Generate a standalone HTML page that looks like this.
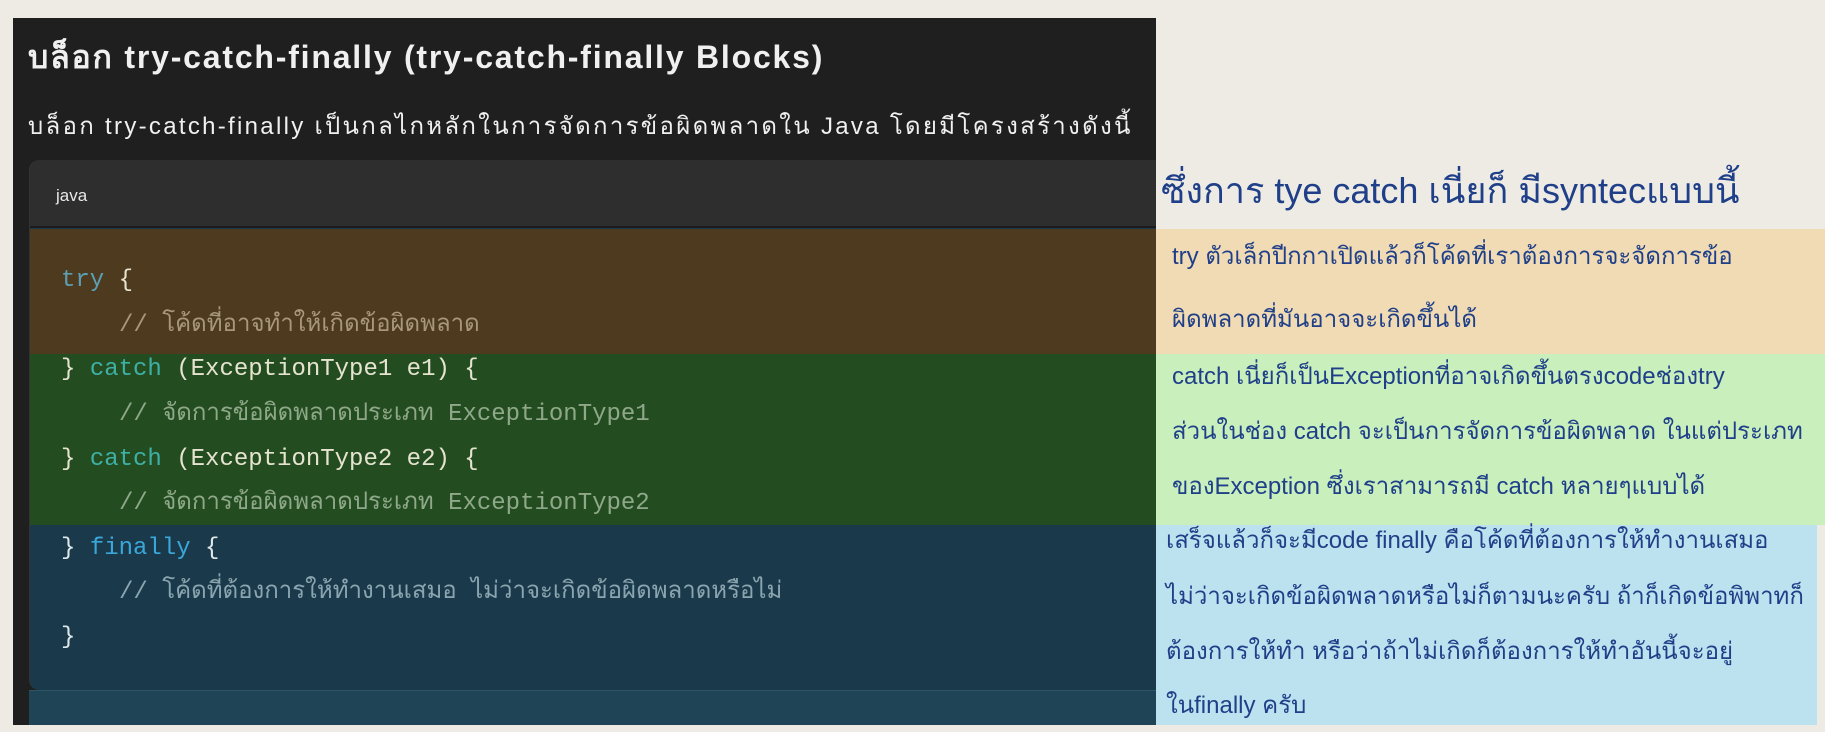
<!DOCTYPE html>
<html><head><meta charset="utf-8">
<style>
*{margin:0;padding:0;box-sizing:border-box}
body{width:1825px;height:732px;background:#eeebe5;position:relative;overflow:hidden;font-family:"Liberation Sans","Noto Sans CJK SC",sans-serif}
.abs{position:absolute}
#panel{left:13px;top:18px;width:1143px;height:707px;background:#1f1f1f}
.t{white-space:nowrap;color:#f0f0f0}
.code{font-family:"Liberation Mono","DejaVu Sans Mono","Noto Sans CJK SC",monospace;font-size:24px;white-space:nowrap;color:#e6e3d0;line-height:30px}
.r{font-size:24px;color:#1f3f88;white-space:nowrap;line-height:30px}
</style></head><body>
<div id="panel" class="abs"></div>
<div class="abs t" style="left:28px;top:32px;font-size:32px;font-weight:bold;letter-spacing:1.8px">บล็อก try-catch-finally (try-catch-finally Blocks)</div>
<div class="abs t" style="left:28px;top:106px;font-size:24px;letter-spacing:2.3px">บล็อก try-catch-finally เป็นกลไกหลักในการจัดการข้อผิดพลาดใน Java โดยมีโครงสร้างดังนี้</div>
<div class="abs" style="left:29px;top:160px;width:1127px;height:530px;border-radius:10px 0 0 10px;background:#1a3a4b;overflow:hidden;border-left:1px solid #333">
 <div class="abs" style="left:0;top:0;width:100%;height:68px;background:#2e2e2e;border-bottom:2px solid #1c1c1c"></div>
 <div class="abs" style="left:0;top:69px;width:100%;height:125px;background:#4d3a1f"></div>
 <div class="abs" style="left:0;top:194px;width:100%;height:171px;background:#234d20"></div>
</div>
<div class="abs" style="left:29px;top:690px;width:1127px;height:35px;background:#1f4455;border-top:1px solid #2c5566"></div>
<div class="abs t" style="left:56px;top:186px;font-size:17px;color:#e8e8e8">java</div>
<div class="abs code" style="left:61px;top:266px"><span style="color:#5c9fb3">try</span> {</div>
<div class="abs code" style="left:119px;top:311px;color:#a8977c">// โค้ดที่อาจทำให้เกิดข้อผิดพลาด</div>
<div class="abs code" style="left:61px;top:355px">} <span style="color:#3eb0a6">catch</span> (ExceptionType1 e1) {</div>
<div class="abs code" style="left:119px;top:400px;color:#8fa88a">// จัดการข้อผิดพลาดประเภท ExceptionType1</div>
<div class="abs code" style="left:61px;top:445px">} <span style="color:#3eb0a6">catch</span> (ExceptionType2 e2) {</div>
<div class="abs code" style="left:119px;top:489px;color:#8fa88a">// จัดการข้อผิดพลาดประเภท ExceptionType2</div>
<div class="abs code" style="left:61px;top:534px;color:#dfe8ea">} <span style="color:#3aa7da">finally</span> {</div>
<div class="abs code" style="left:119px;top:578px;color:#8ba5b0">// โค้ดที่ต้องการให้ทำงานเสมอ  ไม่ว่าจะเกิดข้อผิดพลาดหรือไม่</div>
<div class="abs code" style="left:61px;top:623px;color:#dfe8ea">}</div>

<div class="abs" style="left:1161px;top:162px;font-size:36px;color:#1f3f88;white-space:nowrap">ซึ่งการ tye catch เนี่ยก็ มีsyntecแบบนี้</div>
<div class="abs" style="left:1156px;top:229px;width:669px;height:125px;background:#f1dbb4"></div>
<div class="abs" style="left:1156px;top:354px;width:669px;height:171px;background:#c9efbd"></div>
<div class="abs" style="left:1156px;top:525px;width:661px;height:200px;background:#bde2ef"></div>
<div class="abs r" style="left:1172px;top:242px">try ตัวเล็กปีกกาเปิดแล้วก็โค้ดที่เราต้องการจะจัดการข้อ</div>
<div class="abs r" style="left:1172px;top:305px">ผิดพลาดที่มันอาจจะเกิดขึ้นได้</div>
<div class="abs r" style="left:1172px;top:362px">catch เนี่ยก็เป็นExceptionที่อาจเกิดขึ้นตรงcodeช่องtry</div>
<div class="abs r" style="left:1172px;top:417px">ส่วนในช่อง catch จะเป็นการจัดการข้อผิดพลาด ในแต่ประเภท</div>
<div class="abs r" style="left:1172px;top:472px">ของException ซึ่งเราสามารถมี catch หลายๆแบบได้</div>
<div class="abs r" style="left:1166px;top:526px">เสร็จแล้วก็จะมีcode finally คือโค้ดที่ต้องการให้ทำงานเสมอ</div>
<div class="abs r" style="left:1166px;top:582px">ไม่ว่าจะเกิดข้อผิดพลาดหรือไม่ก็ตามนะครับ ถ้าก็เกิดข้อพิพาทก็</div>
<div class="abs r" style="left:1166px;top:637px">ต้องการให้ทำ หรือว่าถ้าไม่เกิดก็ต้องการให้ทำอันนี้จะอยู่</div>
<div class="abs r" style="left:1166px;top:691px">ในfinally ครับ</div>
</body></html>
